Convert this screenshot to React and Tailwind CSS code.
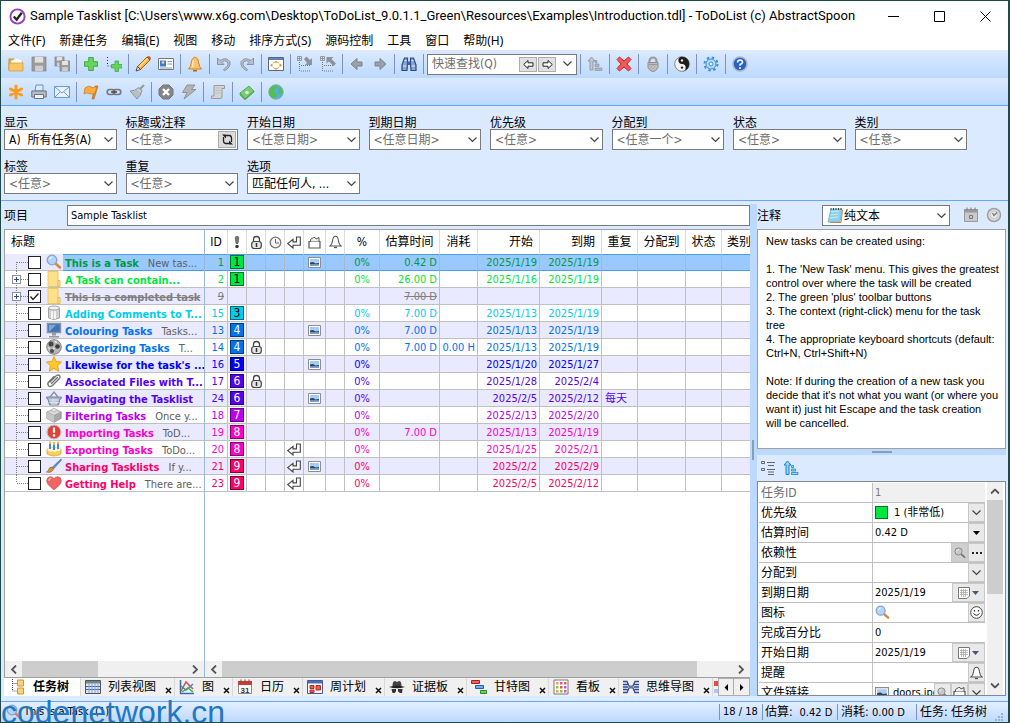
import clsx from 'clsx'

const UI_FONT = "font-['DejaVu_Sans_Condensed','DejaVu_Sans','Noto_Sans_CJK_SC',sans-serif]"

function Icon({ children, className = 'size-4', box = '0 0 16 16' }) {
  return (
    <svg viewBox={box} className={clsx('block shrink-0', className)} fill="none" aria-hidden="true">
      {children}
    </svg>
  )
}

const Lens = ({ gray, className = 'size-4' }) => (
  <Icon className={className}>
    <path d="M9.5 9.5l4.5 4" stroke={gray ? '#777' : '#d08a3c'} strokeWidth="2.6" strokeLinecap="round" />
    <circle cx="6" cy="6" r="4.8" fill={gray ? '#c9c9c9' : '#b4d4f5'} stroke={gray ? '#888' : '#7fa5d0'} strokeWidth="1.3" />
    <path d="M3.5 5.5q.6-2 2.6-2.2" stroke="#fff" />
  </Icon>
)

const Folder = () => (
  <Icon>
    <path d="M2 .5h10v15H2z" fill="#fde08a" stroke="#ecc860" />
    <path d="M12 9.5h2v6h-2z" fill="#fde9a6" stroke="#e6bb4c" />
  </Icon>
)

const Picture = ({ className = 'h-[11px] w-[13px]' }) => (
  <Icon box="0 0 13 11" className={className}>
    <path d="M.5.5h12v10H.5z" fill="#fff" stroke="#8d8d8d" />
    <path d="M2 2h9v7H2z" fill="#a9cdf0" />
    <path d="M2 5.500l3-.5 2.500 1.500L11 6v1.500H2z" fill="#23446c" />
    <path d="M2 7.500h9V9H2z" fill="#7f9fc0" />
  </Icon>
)

const Padlock = () => (
  <Icon className="h-[15px] w-[13px]" box="0 0 13 15">
    <path d="M3.500 6.500V4.500a3 3 0 016 0v2" stroke="#444" strokeWidth="1.300" />
    <rect x="1.700" y="6.500" width="9.600" height="7" rx="2.500" fill="#e6e6e6" stroke="#444" strokeWidth="1.200" />
    <path d="M6.500 8v4" stroke="#333" strokeWidth="1.500" />
  </Icon>
)

const Enter = () => (
  <Icon className="h-[13px] w-[14px]" box="0 0 14 13">
    <path d="M9.500 1h3.800v8.300H6V12L.8 7.600 6 3.400v2.500h3.500z" fill="#fff" stroke="#444" strokeWidth="1.100" />
  </Icon>
)

const Bell = () => (
  <Icon className="h-[14px] w-[13px]" box="0 0 13 14">
    <path d="M6.500 1.300c-2 0-2.700 2-3 4.700Q3 9.500 1 11h11Q10 9.500 9.500 6c-.3-2.700-1-4.700-3-4.700z" fill="#fff" stroke="#555" strokeWidth="1.100" />
    <path d="M5 12.500h3" stroke="#555" strokeWidth="1.300" />
  </Icon>
)

const Clock = () => (
  <Icon className="size-[13px]" box="0 0 13 13">
    <circle cx="6.500" cy="6.500" r="5.300" fill="#f4f4f4" stroke="#777" strokeWidth="1.300" />
    <path d="M6.500 3v4H10" stroke="#666" />
  </Icon>
)

const FileBox = () => (
  <Icon className="size-[13px]" box="0 0 13 13">
    <path d="M1 5.500h11v6.500H1z" fill="#fff" stroke="#555" strokeWidth="1.200" />
    <path d="M2.500 5.500V3.500l3-2h1.500l1 1.500 3-1.500v4" fill="#eee" stroke="#555" />
  </Icon>
)

const Bang = () => (
  <Icon className="h-[14px] w-[6px]" box="0 0 6 14">
    <path d="M1.200 3a1.800 1.800 0 013.600 0L4 8.500H2z" fill="#777" stroke="#444" strokeWidth=".6" />
    <circle cx="3" cy="11.500" r="1.700" fill="#333" />
  </Icon>
)

const Drum = () => (
  <Icon>
    <path d="M2.500 3v10q5.500 3 11 0V3z" fill="#cfcfcf" stroke="#a5a5a5" />
    <ellipse cx="8" cy="3" rx="5.500" ry="2" fill="#f2f2f2" stroke="#a5a5a5" />
    <path d="M6 6v8M9 6v8" stroke="#fff" strokeWidth="1.500" />
  </Icon>
)

const Monitor = () => (
  <Icon>
    <path d="M1.500 1.500h13v9h-13z" fill="#3f73b8" stroke="#8a94a0" strokeWidth="1.500" />
    <path d="M3 3h7L4 9H3z" fill="#79a7de" />
    <path d="M6 11h4v2.500H6zM3 14h10v1.500H3z" fill="#9a9a9a" />
  </Icon>
)

const Ball = () => (
  <Icon>
    <circle cx="8" cy="8" r="7.300" fill="#b4b4b4" stroke="#858585" />
    <circle cx="5" cy="5" r="2.500" fill="#444" />
    <circle cx="11.500" cy="7.500" r="2.300" fill="#3a3a3a" />
    <circle cx="6" cy="12" r="2" fill="#4a4a4a" />
    <path d="M8 1.500l3 1-1 2zM7.500 8l1.500 2-2 .5zM2 8l2 1-1 2z" fill="#eee" />
  </Icon>
)

const Star = () => (
  <Icon>
    <path d="M8 .6l2.200 5 5.300.5-4 3.600 1.200 5.500L8 12.300l-4.700 2.900L4.500 9.700.5 6.100l5.300-.5z" fill="#ffc928" stroke="#f0a010" />
  </Icon>
)

const Clip = () => (
  <Icon>
    <path d="M4 9l6.500-6.500q2-1.200 3.200.3 1 1.500-.5 3L6.500 12.500q-2.200 1.800-4 .2-1.500-2 .3-4L8 3.500M5.500 10.500l6-6" stroke="#777" strokeWidth="1.400" strokeLinecap="round" />
  </Icon>
)

const Basket = () => (
  <Icon>
    <path d="M4 7l4-5 4 5" stroke="#8a8f96" strokeWidth="1.300" />
    <path d="M.5 7h15l-.5 2h-1l-1.500 6h-9L2 9H1z" fill="#a6b6c8" stroke="#76889c" />
    <path d="M3 10h10M3.500 12.500h9M6 9v6M8 9v6M10 9v6" stroke="#dde6f0" />
  </Icon>
)

const Brick = () => (
  <Icon>
    <path d="M.8 5L8 8.500 15.200 5v6.500L8 15.300.8 11.500z" fill="#a9a9a9" stroke="#888" strokeWidth=".7" />
    <path d="M.8 5L8 1.800 15.200 5 8 8.500z" fill="#d9d9d9" stroke="#999" strokeWidth=".7" />
    <ellipse cx="8" cy="3" rx="2.300" ry="1.500" fill="#eee" stroke="#aaa" strokeWidth=".7" />
    <path d="M.8 5L8 8.500v6.800L.8 11.500z" fill="#c6c6c6" />
  </Icon>
)

const Alert = () => (
  <Icon>
    <circle cx="8" cy="8" r="7" fill="#e04437" stroke="#c9c9c9" />
    <path d="M8 3.500v5.300" stroke="#fff" strokeWidth="2.200" />
    <circle cx="8" cy="11.500" r="1.300" fill="#fff" />
  </Icon>
)

const Cake = () => (
  <Icon>
    <path d="M1 8q7-3 14 0v5q-7 4-14 0z" fill="#f8cf5c" stroke="#dda22c" strokeWidth=".8" />
    <path d="M1 8.500q0-2 7-2t7 2q-2 3-3.500 1Q9 12.500 7 10 4 12 1 8.500z" fill="#fff3cf" />
    <path d="M4 3v5M8 3.500V9M12 3v5" stroke="#3d8bd8" strokeWidth="2" />
    <path d="M4 .5V3M8 1V3.500M12 .5V3" stroke="#f5b31c" strokeWidth="1.800" />
  </Icon>
)

const Brush = () => (
  <Icon>
    <path d="M15 1L6 9.500l1.500 1.500L15.500 2z" fill="#5c8fd0" stroke="#3c66a0" strokeWidth=".6" />
    <path d="M6 9q-3 0-3.500 3-.5 1.500-2 2 5 1.500 7-3z" fill="#d98f3a" stroke="#8a5a28" strokeWidth=".6" />
  </Icon>
)

const Heart = () => (
  <Icon>
    <path d="M8 14.800Q.5 9.500.7 5.500 1 1.800 4.500 1.700 7 1.700 8 4q1-2.300 3.500-2.300 3.500.1 3.800 3.800Q15.500 9.500 8 14.800z" fill="#f06464" stroke="#c95050" strokeWidth=".7" />
    <path d="M3 6q0-2.500 2.200-2.600" stroke="#fbb" strokeWidth="1.300" />
  </Icon>
)

const Disk = ({ x = 1, y = 1, s = 14 }) => (
  <>
    <rect x={x} y={y} width={s} height={s} fill="#9c9c9c" stroke="#808080" strokeWidth=".7" />
    <rect x={x + s * 0.2} y={y} width={s * 0.6} height={s * 0.4} fill="#e2e2e2" />
    <rect x={x + s * 0.22} y={y + s * 0.62} width={s * 0.56} height={s * 0.38} fill="#cfcfcf" />
  </>
)

const TreeDots = () => (
  <>
    <path d="M.5.500h4v4h-4zM2.500 1v3M1 2.500h3" stroke="#888" strokeWidth=".8" />
    <path d="M2.500 6v9.500M4 9.500h9M4 15h10" stroke="#777" strokeDasharray="1 1" />
  </>
)

const toolbarOne = [
  ['打开', <><path d="M1 14V3h5l1 2h7v9z" fill="#e8b04a" stroke="#c98c28" /><path d="M3 5l6-3 5 2v4H3z" fill="#fff" stroke="#ccc" strokeWidth=".5" /><path d="M1 7h14v8H1z" fill="#fbc765" stroke="#cf9838" strokeWidth=".7" /></>],
  ['保存', <Disk />],
  ['全部保存', <><Disk x={1} y={1} s={9} /><Disk x={6} y={5} s={10} /></>],
  null,
  ['新建任务', <path d="M5.700 1.500h4.600v4.200h4.200v4.600h-4.200v4.200H5.700v-4.200H1.500V5.700h4.200z" fill="#6ad35f" stroke="#3fae3c" />],
  ['新建子任务', <><path d="M1.500 1v9h4" stroke="#333" strokeDasharray="1 2" /><path d="M9 5h3.500v3.500H16V12h-3.500v3.500H9V12H5.500V8.500H9z" fill="#6ad35f" stroke="#3fae3c" strokeWidth=".8" /></>],
  null,
  ['编辑', <><path d="M2.500 10.500L12 1l3 3-9.500 9.500z" fill="#ffb83a" stroke="#8c5a1c" strokeWidth=".9" /><path d="M3.800 11.200L12.500 2.500" stroke="#ffe09a" strokeWidth="1.200" /><path d="M12 1q2-1 3 0t0 3z" fill="#d65a4a" stroke="#9c4030" strokeWidth=".6" /><path d="M2.500 10.500L1 15l4.500-1.500z" fill="#f4d9b0" stroke="#333" strokeWidth=".8" /></>],
  ['属性', <><path d="M.5 2.500h15v11H.5z" fill="#fff" stroke="#777" /><path d="M2 4.500h6v6H2z" fill="#3c7cc8" /><circle cx="5" cy="6.500" r="1.300" fill="#f4d9b0" /><path d="M9.500 5.500H14M9.500 8H14M2 12h12" stroke="#89a" /></>],
  null,
  ['提醒', <><path d="M8 1q-3.500 1-3.800 6-.3 4-2.700 6h13q-2.400-2-2.700-6Q11.500 2 8 1z" fill="#fcc46a" stroke="#cf8420" /><path d="M6.500 4q-1.200 3-1 7" stroke="#ffe6b0" strokeWidth="1.500" /><path d="M6 14.700h4" stroke="#a86a1a" strokeWidth="1.600" /></>],
  null,
  ['撤消', <path d="M1.500 2v6.500H8L5.700 6.200Q8.500 3.800 11 5.500q2.500 3-1.500 6.500l-2 1.500.8 1.300Q15.500 11 13.800 5.500 10.500.5 4 4.500z" fill="#b9c0ca" stroke="#858c96" strokeWidth=".9" />],
  ['重做', <path d="M14.500 2v6.500H8l2.300-2.300Q7.500 3.800 5 5.500q-2.500 3 1.500 6.500l2 1.500-.8 1.300Q.5 11 2.200 5.500 5.500.5 12 4.500z" fill="#b9c0ca" stroke="#858c96" strokeWidth=".9" />],
  null,
  ['最大化', <><path d="M.5 1.500h15v13H.5z" fill="#fff" stroke="#53698c" /><path d="M1 2h14v2H1z" fill="#6482ae" /><path d="M8 4.500l2 2H6zM8 14l2-2H6zM2 9.200l2.500-2v4zM14 9.200l-2.500-2v4z" fill="#f09020" /><path d="M5 7l2-1h2l2 1M5 11.500l2 1h2l2-1" stroke="#f0a848" /></>],
  null,
  ['展开', <><TreeDots /><path d="M7 3l2.500-2.500L13 4l2-2v7H8l2-2z" fill="#8d939b" /></>],
  ['折叠', <><TreeDots /><path d="M6.500 1h7l-2 2 4.500 4.500L13.500 10 9 5.500l-2.500 2z" fill="#8d939b" /></>],
  null,
  ['后退', <path d="M2 8l6-5.500V6h5v4H8v3.500z" fill="#9ba1a9" stroke="#7c838c" />],
  ['前进', <path d="M14 8L8 2.500V6H3v4h5v3.500z" fill="#9ba1a9" stroke="#7c838c" />],
  null,
  ['查找', <><path d="M3.500 2h3v5.500L6 14.500H1V9zM12.500 2h-3v5.500l.5 7h5V9z" fill="#86a6d6" stroke="#2c4a80" strokeWidth="1.200" /><path d="M6.500 5.500h3v3.500h-3z" fill="#3f62a0" /><path d="M2 10h3.500M10.500 10H14M3.500 4.500h2M10.500 4.500h2" stroke="#dce9fa" /></>],
  null,
]

const toolbarOneRight = [
  null,
  ['排序', <><path d="M4.500 1L1 5h2v9h3V5h2z" fill="#c2c7ce" stroke="#8a9098" strokeWidth=".8" /><path d="M8 4.500h2v2.500H8zM8 8h4v2.500H8zM8 12h7v2.500H8z" fill="#b0b6bd" stroke="#8a9098" strokeWidth=".6" /></>],
  null,
  ['删除', <path d="M3.500 1L8 5l4.500-4L15 3.500 11 8l4 4.500-2.500 2.500L8 11l-4.500 4L1 12.500 5 8 1 3.500z" fill="#f25a5a" stroke="#c42828" />],
  null,
  ['加密', <><path d="M4.500 7V5a3.500 3.500 0 017 0v2" stroke="#9a9a9a" strokeWidth="2.200" /><path d="M3 6.500h10v5q-2 4-5 4t-5-4z" fill="#bcbcbc" stroke="#909090" /><path d="M3.500 8.500h9" stroke="#999" /><circle cx="8" cy="11" r="1.300" fill="#eee" stroke="#888" strokeWidth=".6" /></>],
  null,
  ['主题', <><circle cx="8" cy="8" r="7.300" fill="#f4f4f4" stroke="#888" /><path d="M8 .7a7.300 7.300 0 010 14.600 3.650 3.650 0 000-7.300 3.650 3.650 0 010-7.300z" fill="#1d1d1d" /><circle cx="8" cy="4.400" r="1.200" fill="#eee" /><circle cx="8" cy="11.600" r="1.200" fill="#1d1d1d" /></>],
  null,
  ['设置', <><circle cx="8" cy="8" r="6.500" stroke="#3c8fdc" strokeWidth="2" strokeDasharray="2.500 2.600" /><circle cx="8" cy="8" r="5" fill="#b4dcfd" stroke="#3c8fdc" /><circle cx="8" cy="8" r="2" fill="#eaf5ff" stroke="#3c8fdc" /></>],
  null,
  ['帮助', <><circle cx="8" cy="8" r="7" fill="#2a5fc8" stroke="#a9b4c6" strokeWidth="1.600" /><path d="M5.500 6.500Q5.700 4 8 4t2.500 2.200Q10.500 7.700 8 8.500v1.300" stroke="#fff" strokeWidth="1.600" /><circle cx="8" cy="12" r="1" fill="#fff" /></>],
]

const toolbarTwo = [
  ['星标', <path d="M8 2v12M2.500 5l11 6M2.500 11l11-6" stroke="#fa9a1e" strokeWidth="3" strokeLinecap="round" />],
  ['打印', <><path d="M4 7l1-6h7v6z" fill="#d8ecff" stroke="#5e94c8" /><path d="M.8 7h14.400v6H.8z" fill="#b9bec6" stroke="#6c727c" /><path d="M3.500 10.500h9v4h-9z" fill="#eef2f7" stroke="#6c727c" /></>],
  ['邮件', <><path d="M.5 2.500h15v11H.5z" fill="#e9f3ff" stroke="#6a9cd4" /><path d="M1 3l7 6 7-6M1 13l5-5M15 13l-5-5" stroke="#6a9cd4" /></>],
  null,
  ['标记', <><path d="M12 2h3l-4 13H9z" fill="#d88b2c" stroke="#b06a18" strokeWidth=".6" /><path d="M2 4q4-3 6-1t6-1l-2 7q-4 2-6 .5T1 10z" fill="#ffab40" stroke="#d07c1c" strokeWidth=".8" /></>],
  ['链接', <><rect x="1.200" y="5.500" width="7.500" height="5" rx="2.500" stroke="#777" strokeWidth="1.600" /><rect x="7.300" y="5.500" width="7.500" height="5" rx="2.500" stroke="#777" strokeWidth="1.600" /><path d="M5 8h6" stroke="#444" strokeWidth="1.400" /></>],
  ['清理', <><path d="M15 1l-4.500 4.500" stroke="#999" strokeWidth="2.200" /><path d="M10 3.500l3 3q-1 5-5 8.500L1 7q4 .5 9-3.500z" fill="#b9bec4" stroke="#888e96" strokeWidth=".9" /><path d="M8.500 5l3 3" stroke="#e4e4e4" /></>],
  null,
  ['停止', <><path d="M5 1h6l4 4v6l-4 4H5l-4-4V5z" fill="#858585" stroke="#777" /><path d="M5 5l6 6M11 5l-6 6" stroke="#fff" strokeWidth="2.400" /></>],
  ['运行', <path d="M6 1h8l-3.500 4.500H15L3 15l3-6.500H1.500z" fill="#b4b4b4" stroke="#8c8c8c" strokeWidth=".9" />],
  null,
  ['脚本', <><path d="M4 1.500h10.500v3H12V13q0 1.500-1.500 1.500H1.500V12H4z" fill="#d4d4d4" stroke="#9a9a9a" /><path d="M5.500 4h5M5.500 6.500h5M5.500 9h5" stroke="#bdbdbd" /></>],
  null,
  ['捐赠', <><path d="M1 9l9-7 5 5-9 8z" fill="#7ccb72" stroke="#4fa04c" strokeWidth=".8" /><path d="M1 9v2l5 5 9-8V7l-9 8z" fill="#5fae5a" stroke="#4fa04c" strokeWidth=".6" /><circle cx="8" cy="8.500" r="1.800" fill="#d4f2ce" /></>],
  null,
  ['网站', <><circle cx="8" cy="8" r="7.300" fill="#5aa9ea" stroke="#8bb890" /><path d="M1.500 5q3-4 8-3.500 0 2.500-3 3.500-1 3 2 4 1 3-2 5.500-5-1.500-5.500-6zM11 3.500l2.500.5q2 4 0 7-3-1-3-4z" fill="#52c04c" /></>],
]

function Separator() {
  return (
    <span className="flex w-[6px] shrink-0 justify-center">
      <span className="h-5 w-px bg-[#7d93b5]" />
    </span>
  )
}

function ToolButtons({ items }) {
  return items.map((item, i) =>
    item ? (
      <button key={i} type="button" title={item[0]} aria-label={item[0]} className="flex h-6 w-[23px] shrink-0 items-center justify-center">
        <Icon>{item[1]}</Icon>
      </button>
    ) : (
      <Separator key={i} />
    )
  )
}

function Chevron({ className }) {
  return (
    <Icon box="0 0 9 6" className={clsx('h-[6px] w-[9px]', className)}>
      <path d="M.5.5l4 4 4-4" stroke="#444" strokeWidth="1.200" />
    </Icon>
  )
}

function ArrowHead({ left, className = 'h-[9px] w-[6px]' }) {
  return (
    <Icon box="0 0 6 9" className={className}>
      <path d={left ? 'M5 .5l-4 4 4 4' : 'M1 .5l4 4-4 4'} stroke="#555" strokeWidth="1.800" />
    </Icon>
  )
}

function Combo({ id, value, muted }) {
  return (
    <div className="relative">
      <select
        id={id}
        className={clsx('block h-[21px] w-full appearance-none border border-[#7a7a7a] bg-white pl-1 pr-5 text-[12px] leading-[18px] outline-none', muted ? 'text-[#6d6d6d]' : 'text-black')}
      >
        <option>{value}</option>
      </select>
      <Chevron className="pointer-events-none absolute right-1 top-2" />
    </div>
  )
}

function WindowBar() {
  return (
    <header className="flex h-[30px] shrink-0 items-center bg-white pl-2">
      <Icon className="size-[17px]">
        <circle cx="8" cy="8" r="6.700" fill="#fff" stroke="#9a3fc0" strokeWidth="1.800" />
        <path d="M4.500 8l2.700 3L12 4.500" stroke="#222" strokeWidth="2.200" />
      </Icon>
      <h1 className="ml-1 flex-1 truncate font-['Roboto','Noto_Sans',sans-serif] text-[13px]">
        Sample Tasklist [C:\Users\www.x6g.com\Desktop\ToDoList_9.0.1.1_Green\Resources\Examples\Introduction.tdl] - ToDoList (c) AbstractSpoon
      </h1>
      <button type="button" aria-label="最小化" className="flex h-full w-[46px] items-center justify-center">
        <Icon className="size-[11px]" box="0 0 11 11"><path d="M0 5.500h11" stroke="#000" /></Icon>
      </button>
      <button type="button" aria-label="最大化" className="flex h-full w-[46px] items-center justify-center">
        <Icon className="size-[11px]" box="0 0 11 11"><path d="M.5.5h10v10H.5z" stroke="#000" /></Icon>
      </button>
      <button type="button" aria-label="关闭" className="flex h-full w-[46px] items-center justify-center">
        <Icon className="size-[11px]" box="0 0 11 11"><path d="M.5.5l10 10M10.500.5l-10 10" stroke="#000" /></Icon>
      </button>
    </header>
  )
}

const menus = ['文件(F)', '新建任务', '编辑(E)', '视图', '移动', '排序方式(S)', '源码控制', '工具', '窗口', '帮助(H)']

function MenuBar() {
  return (
    <nav className="flex h-[19px] shrink-0 items-center gap-[14px] bg-white pl-[7px] font-['Noto_Sans','Noto_Sans_CJK_SC',sans-serif] text-[12px] leading-[18px]">
      {menus.map((m) => (
        <button key={m} type="button" className="shrink-0">{m}</button>
      ))}
    </nav>
  )
}

function QuickFind() {
  return (
    <div className="ml-px flex h-[21px] w-[150px] shrink-0 items-center border border-[#7a7a7a] bg-white pr-1">
      <input aria-label="快速查找" placeholder="快速查找(Q)" className="w-0 flex-1 bg-transparent pl-1 text-[12px] outline-none placeholder:text-[#6d6d6d]" />
      <button type="button" aria-label="上一个" className="flex h-[15px] w-[18px] items-center justify-center border border-[#adadad] bg-[#e1e1e1]">
        <Icon className="size-[11px]" box="0 0 11 11"><path d="M.7 5.500L5 1.500v2.300h5v3.400H5v2.300z" fill="#fff" stroke="#222" /></Icon>
      </button>
      <button type="button" aria-label="下一个" className="ml-px mr-[7px] flex h-[15px] w-[18px] items-center justify-center border border-[#adadad] bg-[#e1e1e1]">
        <Icon className="size-[11px]" box="0 0 11 11"><path d="M10.300 5.500L6 1.500v2.300H1v3.400h5v2.300z" fill="#fff" stroke="#222" /></Icon>
      </button>
      <Chevron />
    </div>
  )
}

const filters = [
  ['显示', 'A)\u00a0\u00a0所有任务(A)'],
  ['标题或注释', '<任意>', 'text'],
  ['开始日期', '<任意日期>'],
  ['到期日期', '<任意日期>'],
  ['优先级', '<任意>'],
  ['分配到', '<任意一个>'],
  ['状态', '<任意>'],
  ['类别', '<任意>'],
  ['标签', '<任意>'],
  ['重复', '<任意>'],
  ['选项', '匹配任何人, ...'],
]

function FilterBar() {
  return (
    <section className="grid shrink-0 grid-cols-8 gap-[9px] border-b border-[#66a8f8] pb-[6px] pl-[3px] pr-[41px] pt-[9px]">
      {filters.map(([label, value, kind], i) => (
        <div key={label}>
          <label htmlFor={`filter-${i}`} className="block h-[14px] text-[12px] leading-4">{label}</label>
          {kind === 'text' ? (
            <div className="flex h-[21px] border border-[#7a7a7a] bg-white">
              <input id={`filter-${i}`} placeholder={value} className="w-0 flex-1 pl-1 text-[12px] outline-none placeholder:text-[#6d6d6d]" />
              <button type="button" aria-label="刷新" className="m-px flex w-[18px] items-center justify-center border border-[#adadad] bg-[#dcdcdc]">
                <Icon className="size-[13px]" box="0 0 13 13">
                  <path d="M5 2.500h3.500q2 .3 2 3V9M8 10.500H4.500q-2-.3-2-3V4" stroke="#222" strokeWidth="1.300" />
                  <path d="M1 1.500h4v4zM8 7.500v4h4z" fill="#222" />
                </Icon>
              </button>
            </div>
          ) : (
            <Combo id={`filter-${i}`} value={value} muted={value.startsWith('<')} />
          )}
        </div>
      ))}
    </section>
  )
}

const tones = {
  selected: 'text-[#009a3c]',
  green: 'text-[#00e640]',
  done: 'text-[#808080] line-through',
  cyan: 'text-[#00ccee]',
  blue: 'text-[#0073f0]',
  navy: 'text-[#0000f5]',
  indigo: 'text-[#5500f0]',
  violet: 'text-[#bb00ee]',
  pink: 'text-[#ff00cc]',
  rose: 'text-[#ff0066]',
}

const badges = {
  1: 'bg-[#00e640] border-[#007a20] text-black',
  3: 'bg-[#00ccee] border-[#006a80] text-black',
  4: 'bg-[#0073f0] border-[#003a80] text-white',
  5: 'bg-[#0000f5] border-[#000080] text-white',
  6: 'bg-[#5500f0] border-[#2a0080] text-white',
  7: 'bg-[#bb00ee] border-[#600080] text-white',
  8: 'bg-[#ff00cc] border-[#800066] text-white',
  9: 'bg-[#ff0066] border-[#800033] text-white',
}

const tasks = [
  { id: 1, tone: 'selected', icon: Lens, title: 'This is a Task', note: 'New tas...', pri: 1, file: true, pct: '0%', est: '0.42 D', start: '2025/1/19', due: '2025/1/19' },
  { id: 2, tone: 'green', icon: Folder, title: 'A Task can contain...', pri: 1, expand: true, pct: '0%', est: '26.00 D', start: '2025/1/16', due: '2025/1/19' },
  { id: 9, tone: 'done', icon: Folder, title: 'This is a completed task', expand: true, done: true, est: '7.00 D' },
  { id: 15, tone: 'cyan', icon: Drum, title: 'Adding Comments to T...', pri: 3, pct: '0%', est: '7.00 D', start: '2025/1/13', due: '2025/1/19' },
  { id: 13, tone: 'blue', icon: Monitor, title: 'Colouring Tasks', note: 'Tasks...', pri: 4, file: true, pct: '0%', est: '7.00 D', start: '2025/1/13', due: '2025/1/19' },
  { id: 14, tone: 'blue', icon: Ball, title: 'Categorizing Tasks', note: 'T...', pri: 4, lock: true, pct: '0%', est: '7.00 D', spent: '0.00 H', start: '2025/1/13', due: '2025/1/19' },
  { id: 16, tone: 'navy', icon: Star, title: "Likewise for the task's ...", pri: 5, file: true, pct: '0%', start: '2025/1/20', due: '2025/1/27' },
  { id: 17, tone: 'indigo', icon: Clip, title: 'Associated Files with T...', pri: 6, lock: true, pct: '0%', start: '2025/1/28', due: '2025/2/4' },
  { id: 24, tone: 'indigo', icon: Basket, title: 'Navigating the Tasklist', pri: 6, file: true, pct: '0%', start: '2025/2/5', due: '2025/2/12', repeat: '每天' },
  { id: 18, tone: 'violet', icon: Brick, title: 'Filtering Tasks', note: 'Once y...', pri: 7, pct: '0%', start: '2025/2/13', due: '2025/2/20' },
  { id: 19, tone: 'pink', icon: Alert, title: 'Importing Tasks', note: 'ToD...', pri: 8, pct: '0%', est: '7.00 D', start: '2025/1/13', due: '2025/1/19' },
  { id: 20, tone: 'pink', icon: Cake, title: 'Exporting Tasks', note: 'ToDo...', pri: 8, enter: true, pct: '0%', start: '2025/1/25', due: '2025/2/1' },
  { id: 21, tone: 'rose', icon: Brush, title: 'Sharing Tasklists', note: 'If y...', pri: 9, enter: true, file: true, pct: '0%', start: '2025/2/2', due: '2025/2/9' },
  { id: 23, tone: 'rose', icon: Heart, title: 'Getting Help', note: 'There are...', pri: 9, enter: true, pct: '0%', start: '2025/2/5', due: '2025/2/12' },
]

function TreeGutter({ first, last, expand }) {
  return (
    <Icon box="0 0 23 17" className="h-[17px] w-[23px]">
      <path d={`M11.500 ${first ? 8 : 0}V${last ? 8 : 17}M12 8.500h11`} stroke="#808080" strokeDasharray="1 1" />
      {expand && (
        <>
          <rect x="7.500" y="4.500" width="8" height="8" fill="#fff" stroke="#919191" />
          <path d="M9 8.500h5M11.500 6v5" stroke="#2a4a9a" />
        </>
      )}
    </Icon>
  )
}

function TaskTree() {
  return (
    <table className="w-full table-fixed border-collapse text-[11px]">
      <thead>
        <tr className="h-6 bg-white">
          <th className="p-0 pl-[6px] text-left text-[12px] font-normal leading-[18px]">标题</th>
        </tr>
      </thead>
      <tbody>
        {tasks.map((t, i) => (
          <tr key={t.id} className={i % 2 ? 'bg-white' : 'bg-[#e9e9ff]'}>
            <td className="p-0">
              <div className="flex h-[17px] items-center border-b border-[#c0c0c0]">
                <TreeGutter first={i === 0} last={i === tasks.length - 1} expand={t.expand} />
                <span className="relative flex shrink-0">
                  <input type="checkbox" aria-label={t.title} defaultChecked={t.done} className="size-[13px] appearance-none border border-[#222] bg-white" />
                  {t.done && (
                    <Icon box="0 0 13 13" className="pointer-events-none absolute left-0 top-0 size-[13px]">
                      <path d="M2.500 6.500l2.500 3 5.500-6" stroke="#222" strokeWidth="1.300" />
                    </Icon>
                  )}
                </span>
                <span className="ml-[5px] mr-px shrink-0"><t.icon /></span>
                <span
                  className={clsx(
                    'flex h-[17px] min-w-0 flex-1 gap-[9px] overflow-hidden whitespace-nowrap pl-[2px] leading-[17px]',
                    i === 0 ? 'border-y border-[#4a9cf0] bg-[#99c9ff]' : 'pt-px'
                  )}
                >
                  <b className={tones[t.tone]}>{t.title}</b>
                  {t.note && <span className="text-[#606060]">{t.note}</span>}
                </span>
              </div>
            </td>
          </tr>
        ))}
      </tbody>
    </table>
  )
}

const columns = [
  { key: 'id', head: 'ID', cell: 'text-right pr-[3px]', w: 'w-[23px]' },
  { key: 'pri', head: <Bang />, w: 'w-[19px]' },
  { key: 'lock', head: <Padlock />, w: 'w-[19px]' },
  { key: 'clock', head: <Clock />, w: 'w-[19px]' },
  { key: 'enter', head: <Enter />, w: 'w-[19px]' },
  { key: 'file', head: <FileBox />, w: 'w-[22px]' },
  { key: 'bell', head: <Bell />, w: 'w-[19px]' },
  { key: 'pct', head: '%', cell: 'text-center', w: 'w-[35px]' },
  { key: 'est', head: '估算时间', cell: 'text-right pr-[2px]', w: 'w-[60px]' },
  { key: 'spent', head: '消耗', cell: 'text-right pr-[2px]', w: 'w-[38px]' },
  { key: 'start', head: '开始', headCell: 'justify-end pr-[6px]', cell: 'text-right pr-[2px]', w: 'w-[62px]' },
  { key: 'due', head: '到期', headCell: 'justify-end pr-[6px]', cell: 'text-right pr-[2px]', w: 'w-[62px]' },
  { key: 'repeat', head: '重复', cell: 'pl-[3px]', w: 'w-[36px]' },
  { key: 'alloc', head: '分配到', w: 'w-[48px]' },
  { key: 'status', head: '状态', w: 'w-[36px]' },
  { key: 'category', head: '类别', headCell: 'pl-[5px]', w: 'w-auto' },
]

function cellContent(task, key) {
  if (key === 'pri') {
    return task.pri && (
      <span className={clsx('mx-auto block size-[14px] border text-center text-[12px] leading-[12px]', badges[task.pri])}>{task.pri}</span>
    )
  }
  if (key === 'lock') return task.lock && <span className="flex justify-center"><Padlock /></span>
  if (key === 'enter') return task.enter && <span className="flex justify-center"><Enter /></span>
  if (key === 'file') return task.file && <span className="flex justify-center"><Picture /></span>
  return task[key] && <span className="block pt-[2px] leading-[14px]">{task[key]}</span>
}

function TaskColumns() {
  return (
    <table className="w-full table-fixed border-separate border-spacing-0 text-[11px]">
      <thead>
        <tr className="bg-white">
          {columns.map((c) => (
            <th key={c.key} className={clsx('overflow-hidden border-r border-[#dcdcdc] p-0 text-[12px] font-normal last:border-r-0', c.w)}>
              <div className={clsx('flex h-6 items-center whitespace-nowrap', c.headCell || 'justify-center')}>{c.head}</div>
            </th>
          ))}
        </tr>
      </thead>
      <tbody>
        {tasks.map((t, i) => (
          <tr key={t.id} className={clsx(tones[t.tone], i === 0 ? 'bg-[#99c9ff]' : i % 2 ? 'bg-white' : 'bg-[#e9e9ff]')}>
            {columns.map((c) => (
              <td
                key={c.key}
                className={clsx(
                  'h-[17px] whitespace-nowrap border-b border-r p-0 last:border-r-0',
                  i === 0 ? 'border-r-[#a9b9cc] border-b-[#4a9cf0] shadow-[inset_0_1px_0_#4a9cf0]' : 'border-[#c0c0c0]',
                  c.cell
                )}
              >
                {cellContent(t, c.key)}
              </td>
            ))}
          </tr>
        ))}
      </tbody>
    </table>
  )
}

function HScroll({ thumb }) {
  return (
    <div className="flex h-4 shrink-0 items-center bg-[#f0f0f0] px-[6px]">
      <ArrowHead left />
      <div className="mx-[5px] flex h-4 flex-1"><span className={clsx('h-4 bg-[#cdcdcd]', thumb)} /></div>
      <ArrowHead />
    </div>
  )
}

const tabs = [
  ['列表视图', <><path d="M.5 1.500h15v13H.5z" fill="#dce8f8" stroke="#555" /><path d="M1 2h14v2.500H1z" fill="#6c8a80" /><path d="M1 7.500h14M1 10.500h14" stroke="#3c5cb4" /><path d="M4 4v10M7 4v10M10 4v10M13 4v10" stroke="#8fa4c8" /></>],
  ['图', <><path d="M1.500 1v13.500H15" stroke="#3a6ab8" strokeWidth="1.500" /><path d="M2 12l5-9 7 7" stroke="#e04a3a" strokeWidth="1.500" /><path d="M2 7l5 4 7-6" stroke="#3a8ad8" strokeWidth="1.500" /><path d="M3 13l6-4 5 4" stroke="#3fae4a" strokeWidth="1.500" /></>],
  ['日历', <><path d="M1.500 2.500h13v12h-13z" fill="#fff" stroke="#8a8a8a" /><path d="M1 2h14v4H1z" fill="#cc3b33" /><path d="M4 .5v3M8 .5v3M12 .5v3" stroke="#555" /><text x="8" y="13.500" fontSize="8" fontFamily="Liberation Sans" fontWeight="bold" textAnchor="middle" fill="#333">31</text></>],
  ['周计划', <><path d="M.5 1.500h15v13H.5z" fill="#fff" stroke="#3c5c9c" /><path d="M1 2h14v2.500H1z" fill="#4a6fb8" /><path d="M3 6.500h4v3H3zM3 11h4v2.500H3zM9 6.500h4.500V11H9z" fill="#e85a50" stroke="#b82a24" /></>],
  ['证据板', <><path d="M3.500 7q0-5 2.500-5l2 1 2-1q2.500 0 2.500 5z" fill="#444" /><path d="M0 8q8-3 16 0-8 2.500-16 0z" fill="#222" /><path d="M2.500 10h4.500v2.500l-1.500 1.500h-2zM9 10h4.500l-.5 4h-2L9 12.500z" fill="#333" /></>],
  ['甘特图', <><path d="M.5 1.500h8v3h-8z" fill="#e86060" stroke="#a82020" /><path d="M4.500 6.500h8v3h-8z" fill="#6aaef0" stroke="#2a62a8" /><path d="M9.500 11.500h6v3h-6z" fill="#74d060" stroke="#2a8a28" /></>],
  ['看板', <><path d="M1 1h14v14H1z" fill="#fff" stroke="#777" /><path d="M3 3h2.500v2.500H3zM3 11h2.500v2.500H3z" fill="#f0a040" /><path d="M7 3h2.500v2.500H7zM11 11h2.500v2.500H11z" fill="#d85a9a" /><path d="M11 3h2.500v2.500H11zM7 7h2.500v2.500H7z" fill="#e05a50" /><path d="M3 7h2.500v2.500H3zM7 11h2.500v2.500H7z" fill="#8ac83c" /><path d="M11 7h2.500v2.500H11z" fill="#9a6ad8" /></>],
  ['思维导图', <><path d="M0 2.500h4L6.500 8 4 13.500H0M16 2.500h-4L9.500 8l2.500 5.500h4M0 5.500h4.500M0 10.500h4.500M0 8h5M16 5.500h-4.500M16 10.500h-4.500M16 8h-5" stroke="#2c4a98" strokeWidth="1.300" /><rect x="6" y="6.500" width="4" height="3" fill="#777" /></>],
]

function ViewTabs() {
  return (
    <div className="flex h-[19px] shrink-0 border-t border-[#a0a0a0] bg-[#f0f0f0] text-[12px]">
      <div className="flex min-w-0 flex-1 overflow-hidden">
        <button type="button" className="flex w-[76px] shrink-0 items-center gap-[6px] bg-white pl-[7px]">
          <Icon>
            <path d="M1.500 0v12M1.500 4.500H6M1.500 12H6" stroke="#444" strokeDasharray="1 1" />
            <path d="M6.500 1h6v6h-6zM6.500 9h6v6h-6z" fill="#fbd27a" stroke="#c8963c" />
          </Icon>
          <b className="whitespace-nowrap">任务树</b>
        </button>
        {tabs.map(([label, art]) => (
          <span key={label} className="flex shrink-0 items-center border-l border-[#d9d9d9] pl-1 pr-[2px]">
            <button type="button" className="flex items-center gap-[7px] whitespace-nowrap">
              <Icon>{art}</Icon>
              {label}
            </button>
            <button type="button" aria-label={`关闭 ${label}`} className="ml-[9px] mt-[7px]">
              <Icon className="size-[7px]" box="0 0 7 7"><path d="M1 1l5 5M6 1L1 6" stroke="#111" strokeWidth="1.500" /></Icon>
            </button>
          </span>
        ))}
        <button type="button" aria-label="更多视图" className="flex shrink-0 items-center border-l border-[#d9d9d9] pl-px">
          <Icon><path d="M0 2h6v5H0z" fill="#e84a4a" /><path d="M0 10h6v4H0z" fill="#a9c6f4" /></Icon>
        </button>
      </div>
      <button type="button" aria-label="向左" className="flex w-4 shrink-0 items-center justify-center border border-[#adadad]">
        <Icon className="size-[7px]" box="0 0 7 7"><path d="M5 0v7L1.500 3.500z" fill="#000" /></Icon>
      </button>
      <button type="button" aria-label="向右" className="flex w-4 shrink-0 items-center justify-center border border-l-0 border-[#adadad]">
        <Icon className="size-[7px]" box="0 0 7 7"><path d="M2 0v7l3.500-3.500z" fill="#000" /></Icon>
      </button>
    </div>
  )
}

const CalendarButton = () => (
  <button type="button" aria-label="选择日期" className="flex h-[19px] w-[33px] shrink-0 items-center justify-center gap-[2px] border border-[#c8c8c8] bg-[#e9e9e9]">
    <Icon className="size-3" box="0 0 12 12">
      <path d="M.5.5h11V9L9 11.500H.5z" fill="#fff" stroke="#777" />
      <path d="M2 3.500h8M2 5.500h8M2 7.500h8M3.500 2v8M5.500 2v8M7.500 2v8" stroke="#aaa" strokeWidth=".8" />
    </Icon>
    <Icon className="h-1 w-[7px]" box="0 0 7 4"><path d="M0 0h7L3.500 4z" fill="#44577c" /></Icon>
  </button>
)

function SmallButton({ label, children, dark }) {
  return (
    <button type="button" aria-label={label} className={clsx('flex h-[19px] w-[17px] shrink-0 items-center justify-center border border-[#c8c8c8]', dark ? 'bg-[#cfcfcf]' : 'bg-[#e9e9e9]')}>
      {children}
    </button>
  )
}

const attributes = [
  { label: '任务ID', value: '1', readOnly: true },
  { label: '优先级', value: '1 (非常低)', lead: <span className="size-[13px] shrink-0 border border-[#007a20] bg-[#00e640]" />, indent: true, tail: <SmallButton label="选择"><Chevron /></SmallButton> },
  { label: '估算时间', value: '0.42 D', tail: <SmallButton label="单位"><Icon className="h-1 w-[7px]" box="0 0 7 4"><path d="M0 0h7L3.500 4z" fill="#000" /></Icon></SmallButton> },
  { label: '依赖性', value: '', tail: <><SmallButton label="查看" dark><Lens gray className="size-3" /></SmallButton><SmallButton label="更多"><Icon className="h-[2px] w-[10px]" box="0 0 10 2"><path d="M0 0h2v2H0zM4 0h2v2H4zM8 0h2v2H8z" fill="#222" /></Icon></SmallButton></> },
  { label: '分配到', value: '', tail: <SmallButton label="选择"><Chevron /></SmallButton> },
  { label: '到期日期', value: '2025/1/19', tail: <CalendarButton /> },
  { label: '图标', value: '', lead: <Lens className="size-[15px]" />, tail: <SmallButton label="选择图标"><Icon className="size-[13px]" box="0 0 13 13"><circle cx="6.500" cy="6.500" r="5.800" fill="#fff" stroke="#444" /><path d="M3.500 7.500q3 3.500 6 0" stroke="#333" /><path d="M4.500 4v1.500M8.500 4v1.500" stroke="#333" strokeWidth="1.300" /></Icon></SmallButton> },
  { label: '完成百分比', value: '0' },
  { label: '开始日期', value: '2025/1/19', tail: <CalendarButton /> },
  { label: '提醒', value: '', tail: <SmallButton label="提醒"><Bell /></SmallButton> },
  { label: '文件链接', value: 'doors.jpg', lead: <Picture className="h-3 w-[14px]" />, tail: <><SmallButton label="查看"><Lens gray className="size-3" /></SmallButton><SmallButton label="打开"><FileBox /></SmallButton><SmallButton label="选择"><Chevron /></SmallButton></> },
]

function AttributePanel() {
  return (
    <div className="flex min-h-0 flex-1 overflow-hidden border border-[#828790] bg-white">
      <div className="ml-px mt-px min-w-0 flex-1 overflow-hidden">
        <table className="w-full table-fixed border-separate border-spacing-0 text-[12px]">
          <tbody>
            {attributes.map((a, i) => (
              <tr key={a.label}>
                <th className={clsx('h-5 w-[114px] border-b border-r border-[#c0c0c0] p-0 pl-[2px] pt-[2px] text-left font-normal leading-[17px]', a.readOnly && 'text-[#6d6d6d]')}>
                  <label htmlFor={`attr-${i}`}>{a.label}</label>
                </th>
                <td className={clsx('border-b border-[#c0c0c0] p-0', a.readOnly && 'bg-[#f0f0f0]')}>
                  <div className="flex h-[19px] items-center pl-[2px]">
                    {a.lead}
                    <input
                      id={`attr-${i}`}
                      defaultValue={a.value}
                      readOnly={a.readOnly}
                      className={clsx('w-0 flex-1 bg-transparent pt-[2px] text-[11px] outline-none', a.indent && 'pl-[6px]', a.value === 'doors.jpg' && 'pl-1', a.readOnly ? 'text-[#7c7c7c]' : 'text-black')}
                    />
                    {a.tail}
                  </div>
                </td>
              </tr>
            ))}
          </tbody>
        </table>
      </div>
      <div className="mx-[2px] flex w-4 shrink-0 flex-col items-center bg-[#f0f0f0] py-[5px]">
        <ArrowHead left className="h-[9px] w-[6px] rotate-90" />
        <span className="mt-1 h-[94px] w-4 bg-[#cdcdcd]" />
        <span className="flex-1" />
        <ArrowHead className="h-[9px] w-[6px] rotate-90" />
      </div>
    </div>
  )
}

const comments = `New tasks can be created using:

1. The 'New Task' menu. This gives the greatest control over where the task will be created
2. The green 'plus' toolbar buttons
3. The context (right-click) menu for the task tree
4. The appropriate keyboard shortcuts (default: Ctrl+N, Ctrl+Shift+N)

Note: If during the creation of a new task you decide that it's not what you want (or where you want it) just hit Escape and the task creation will be cancelled.`

function SidePanel() {
  return (
    <aside className="flex w-[249px] shrink-0 flex-col">
      <div className="flex h-[25px] shrink-0 items-start pt-px text-[12px]">
        <label htmlFor="comment-type" className="w-[65px] leading-[22px]">注释</label>
        <div className="relative w-[128px]">
          <select id="comment-type" className="block h-[21px] w-full appearance-none border border-[#7a7a7a] bg-white pl-[21px] pr-5 text-[12px] leading-[18px] outline-none">
            <option>纯文本</option>
          </select>
          <Icon className="pointer-events-none absolute left-[5px] top-[2px] size-4">
            <path d="M4 2h11l-2 13H1z" fill="#8fd0ea" stroke="#6ab0cc" strokeWidth=".8" />
            <path d="M4 5l8-1M3.500 8l8-1M3 11l8-1" stroke="#c9ecf8" />
            <path d="M4 1v2M6.500 1v2M9 1v2M11.500 1v2M14 1v2" stroke="#444" />
            <path d="M15.500 3L14 15.500H3" stroke="#c08a4a" />
          </Icon>
          <Chevron className="pointer-events-none absolute right-1 top-2" />
        </div>
        <button type="button" aria-label="日期" className="ml-[13px] mt-[2px]">
          <Icon>
            <path d="M1.500 2.500h13v12h-13z" fill="#c9c9c9" stroke="#999" />
            <path d="M1 2h14v3.500H1z" fill="#999" />
            <path d="M4 .5V3M8 .5V3M12 .5V3" stroke="#777" />
            <path d="M6.500 8.500h3v3h-3z" stroke="#777" />
          </Icon>
        </button>
        <button type="button" aria-label="时间" className="ml-[7px] mt-[2px]">
          <Icon>
            <circle cx="8" cy="8" r="6.500" fill="#ddd" stroke="#a0a0a0" strokeWidth="1.500" />
            <circle cx="8" cy="8" r="4" fill="#e8e8e8" stroke="#b8b8b8" strokeWidth=".7" />
            <path d="M6.500 6l1.500 2.500L11 5.500" stroke="#777" strokeWidth="1.300" />
          </Icon>
        </button>
      </div>
      <textarea
        aria-label="注释内容"
        defaultValue={comments}
        className="h-[220px] shrink-0 resize-none overflow-hidden border border-[#a0a0a0] bg-white pl-2 pr-[6px] pt-1 font-['Liberation_Sans',sans-serif] text-[11px] leading-[14px] outline-none"
      />
      <div className="flex h-[6px] shrink-0 items-center justify-center bg-[#bcd9ff]"><span className="h-[2px] w-5 bg-[#83a0b8]" /></div>
      <div className="flex h-[26px] shrink-0 items-center gap-[7px] pl-[3px]">
        <button type="button" aria-label="分组">
          <Icon><path d="M1.500 1.500h3v2h-3zM1.500 8.500h3v2h-3z" stroke="#666" /><path d="M7 2.500h8M8 5.500h6M7 9.500h8M8 12h6M8 14.500h6" stroke="#666" /></Icon>
        </button>
        <button type="button" aria-label="排序">
          <Icon><path d="M4.500 1L1 5h2v9.500h3V5h2z" fill="#8fd4fa" stroke="#1c84cc" /><path d="M8.500 5.500h2v2h-2zM8.500 9h4v2h-4zM8.500 12.500h6.500v2H8.500z" fill="#8fd4fa" stroke="#1c84cc" strokeWidth=".8" /></Icon>
        </button>
      </div>
      <AttributePanel />
    </aside>
  )
}

function StatusBar() {
  return (
    <footer className="relative flex h-[21px] shrink-0 items-center border-t border-[#66a8f8] bg-gradient-to-b from-[#e4efff] to-[#bcd9ff] pl-[5px] text-[12px]">
      <Lens />
      <span className="ml-[2px] flex-1 text-[11px]">This is a Task&nbsp; (1)</span>
      <span className="h-4 w-[43px] shrink-0 whitespace-nowrap border-l border-[#7d93b5] pl-[3px] text-[11px] leading-4">18 / 18</span>
      <span className="h-4 w-[75px] shrink-0 whitespace-nowrap border-l border-[#7d93b5] pl-[2px] leading-4">估算:&nbsp; <span className="text-[11px]">0.42 D</span></span>
      <span className="h-4 w-[79px] shrink-0 whitespace-nowrap border-l border-[#7d93b5] pl-[3px] leading-4">消耗: <span className="text-[11px]">0.00 D</span></span>
      <span className="h-4 w-[78px] shrink-0 whitespace-nowrap border-l border-[#7d93b5] pl-[3px] leading-4">任务: 任务树</span>
      <Icon className="mr-1 size-[10px] self-end" box="0 0 10 10">
        <path d="M7 1h2v2H7zM4 4h2v2H4zM7 4h2v2H7zM1 7h2v2H1zM4 7h2v2H4zM7 7h2v2H7z" fill="#9ab0cc" />
      </Icon>
      <span className="pointer-events-none absolute -bottom-1 left-0 font-['Liberation_Sans',sans-serif] text-[32px] leading-7 text-[#2277c0]">codenetwork.cn</span>
    </footer>
  )
}

export default function App() {
  return (
    <div className={clsx('flex h-screen flex-col overflow-hidden border border-r-2 border-[#1f4a48] bg-[#dceaff] text-black', UI_FONT)}>
      <WindowBar />
      <MenuBar />
      <div className="flex h-7 shrink-0 items-center bg-gradient-to-b from-[#dceaff] to-[#bcd9ff] pl-[3px]">
        <ToolButtons items={toolbarOne} />
        <QuickFind />
        <ToolButtons items={toolbarOneRight} />
      </div>
      <div className="flex h-7 shrink-0 items-center border-b border-[#66a8f8] bg-gradient-to-b from-[#dceaff] to-[#bcd9ff] pl-[3px]">
        <ToolButtons items={toolbarTwo} />
      </div>
      <FilterBar />
      <main className="flex min-h-0 flex-1 pb-[5px] pl-[3px] pr-[2px] pt-[3px]">
        <section className="flex min-w-0 flex-1 flex-col">
          <div className="flex h-[25px] shrink-0 items-start pt-px">
            <label htmlFor="project" className="w-[63px] text-[12px] leading-[22px]">项目</label>
            <input id="project" defaultValue="Sample Tasklist" className="h-[21px] min-w-0 flex-1 border border-[#7a7a7a] bg-white pl-[3px] text-[11px] outline-none" />
          </div>
          <div className="flex min-h-0 flex-1 border-l border-t border-[#a0a0a0] bg-white">
            <div className="flex w-[200px] shrink-0 flex-col border-r border-[#9ab8dc]">
              <div className="min-h-0 flex-1 overflow-hidden"><TaskTree /></div>
              <HScroll thumb="w-[46%]" />
            </div>
            <div className="flex min-w-0 flex-1 flex-col">
              <div className="min-h-0 flex-1 overflow-hidden"><TaskColumns /></div>
              <HScroll thumb="w-[93%]" />
            </div>
          </div>
          <ViewTabs />
        </section>
        <div className="flex w-[7px] shrink-0 items-center bg-[#bcd9ff] pl-[2px]"><span className="h-5 w-[2px] bg-[#83a0b8]" /></div>
        <SidePanel />
      </main>
      <StatusBar />
    </div>
  )
}
